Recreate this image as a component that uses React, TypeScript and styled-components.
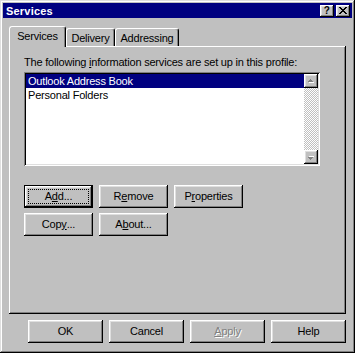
import React from "react";
import styled, { createGlobalStyle } from "styled-components";

const Global = createGlobalStyle`
  html, body {
    margin: 0;
    padding: 0;
    background: #c0c0c0;
  }
  body {
    font-family: "Liberation Sans", Arial, sans-serif;
    font-size: 11px;
    letter-spacing: -0.2px;
    color: #000;
  }
`;

const raised = `
  box-shadow: inset -1px -1px #000, inset 1px 1px #fff,
    inset -2px -2px #808080, inset 2px 2px #dfdfdf;
`;

const Window = styled.div`
  width: 355px;
  height: 353px;
  box-sizing: border-box;
  background: #c0c0c0;
  padding: 3px;
  box-shadow: inset -1px -1px #000, inset 1px 1px #dfdfdf,
    inset -2px -2px #808080, inset 2px 2px #fff;
  display: flex;
  flex-direction: column;
`;

const TitleBar = styled.div`
  height: 15px;
  background: #000080;
  color: #fff;
  font-weight: bold;
  letter-spacing: 0.2px;
  display: flex;
  align-items: center;
  justify-content: space-between;
  padding: 0 2px 0 3px;
`;

const CaptionButtons = styled.div`
  display: flex;
  gap: 2px;
`;

const CaptionButton = styled.div`
  width: 14px;
  height: 12px;
  background: #c0c0c0;
  color: #000;
  display: flex;
  align-items: center;
  justify-content: center;
  font-size: 10px;
  line-height: 10px;
  ${raised}
`;

const Body = styled.div`
  padding: 8px 6px 0 6px;
  display: flex;
  flex-direction: column;
`;

const TabStrip = styled.div`
  display: flex;
  align-items: flex-end;
  height: 20px;
  position: relative;
  z-index: 1;
`;

const Tab = styled.div<{ $active?: boolean; $w: number }>`
  width: ${(p) => p.$w}px;
  height: ${(p) => (p.$active ? 21 : 18)}px;
  box-sizing: border-box;
  margin-bottom: ${(p) => (p.$active ? -1 : 0)}px;
  background: #c0c0c0;
  display: flex;
  align-items: center;
  justify-content: center;
  padding-bottom: ${(p) => (p.$active ? 2 : 0)}px;
  border-top: 1px solid #fff;
  border-left: 1px solid #fff;
  border-right: 1px solid #000;
  border-radius: 3px 3px 0 0;
  box-shadow: inset -1px 0 #808080;
`;

const Panel = styled.div`
  height: 268px;
  box-sizing: border-box;
  padding: 10px 14px 0 15px;
  background: #c0c0c0;
  box-shadow: inset -1px -1px #000, inset 1px 1px #fff,
    inset -2px -2px #808080;
  display: flex;
  flex-direction: column;
`;

const Caption = styled.div`
  line-height: 13px;
  height: 13px;
`;

const ListBox = styled.div`
  margin-top: 3px;
  width: 296px;
  height: 94px;
  box-sizing: border-box;
  padding: 2px;
  background: #fff;
  box-shadow: inset 1px 1px #808080, inset -1px -1px #fff,
    inset 2px 2px #000, inset -2px -2px #dfdfdf;
  display: flex;
`;

const Rows = styled.div`
  flex: 1;
  display: flex;
  flex-direction: column;
`;

const Row = styled.div<{ $selected?: boolean }>`
  height: 14px;
  line-height: 14px;
  padding-left: 2px;
  background: ${(p) => (p.$selected ? "#000080" : "transparent")};
  color: ${(p) => (p.$selected ? "#fff" : "#000")};
`;

const ScrollBar = styled.div`
  width: 14px;
  display: flex;
  flex-direction: column;
  background-color: #fff;
  background-image: conic-gradient(#c0c0c0 25%, #fff 0 50%, #c0c0c0 0 75%, #fff 0);
  background-size: 2px 2px;
`;

const ScrollArrow = styled.div`
  width: 14px;
  height: 14px;
  background: #c0c0c0;
  display: flex;
  align-items: center;
  justify-content: center;
  ${raised}
`;

const Track = styled.div`
  flex: 1;
`;

const ButtonGrid = styled.div`
  margin-top: 19px;
  display: grid;
  grid-template-columns: repeat(3, 69px);
  grid-auto-rows: 23px;
  gap: 5px 6px;
`;

const Button = styled.div<{ $w?: number; $default?: boolean; $disabled?: boolean }>`
  width: ${(p) => p.$w ?? 69}px;
  height: 23px;
  box-sizing: border-box;
  padding: 4px;
  background: #c0c0c0;
  display: flex;
  color: ${(p) => (p.$disabled ? "#808080" : "#000")};
  text-shadow: ${(p) => (p.$disabled ? "1px 1px #fff" : "none")};
  box-shadow: ${(p) =>
    p.$default
      ? "inset 0 0 0 1px #000, inset -2px -2px #000, inset 2px 2px #fff, inset -3px -3px #808080, inset 3px 3px #dfdfdf"
      : "inset -1px -1px #000, inset 1px 1px #fff, inset -2px -2px #808080, inset 2px 2px #dfdfdf"};
`;

const ButtonLabel = styled.span<{ $focus?: boolean }>`
  flex: 1;
  display: flex;
  align-items: center;
  justify-content: center;
  border: 1px dotted ${(p) => (p.$focus ? "#000" : "transparent")};
  line-height: 13px;
`;

const Footer = styled.div`
  margin-top: 6px;
  display: flex;
  justify-content: flex-end;
  gap: 6px;
`;

const CloseGlyph = () => (
  <svg width="8" height="7" viewBox="0 0 8 7" shapeRendering="crispEdges">
    <path
      d="M0 0h2v1h-2zM6 0h2v1h-2zM1 1h2v1h-2zM5 1h2v1h-2zM2 2h4v1h-4zM3 3h2v1h-2zM2 4h4v1h-4zM1 5h2v1h-2zM5 5h2v1h-2zM0 6h2v1h-2zM6 6h2v1h-2z"
      fill="#000"
    />
  </svg>
);

const Arrow = ({ down }: { down?: boolean }) => (
  <svg width="8" height="5" viewBox="0 0 8 5" shapeRendering="crispEdges">
    <g transform={down ? "translate(0 5) scale(1 -1)" : undefined}>
      <path d="M4 1h1v1h1v1h1v1h-5v-1h1v-1h1z" fill="#fff" />
      <path d="M3 0h1v1h1v1h1v1h-5v-1h1v-1h1z" fill="#808080" />
    </g>
  </svg>
);

const App = () => {
  return (
    <>
      <Global />
      <Window>
        <TitleBar>
          <span>Services</span>
          <CaptionButtons>
            <CaptionButton>?</CaptionButton>
            <CaptionButton>
              <CloseGlyph />
            </CaptionButton>
          </CaptionButtons>
        </TitleBar>
        <Body>
          <TabStrip>
            <Tab $active $w={57}>Services</Tab>
            <Tab $w={49}>Delivery</Tab>
            <Tab $w={64}>Addressing</Tab>
          </TabStrip>
          <Panel>
            <Caption>
              The following <u>i</u>nformation services are set up in this profile:
            </Caption>
            <ListBox>
              <Rows>
                <Row $selected>Outlook Address Book</Row>
                <Row>Personal Folders</Row>
              </Rows>
              <ScrollBar>
                <ScrollArrow>
                  <Arrow />
                </ScrollArrow>
                <Track />
                <ScrollArrow>
                  <Arrow down />
                </ScrollArrow>
              </ScrollBar>
            </ListBox>
            <ButtonGrid>
              <Button $default>
                <ButtonLabel $focus>
                  A<u>d</u>d...
                </ButtonLabel>
              </Button>
              <Button>
                <ButtonLabel>
                  R<u>e</u>move
                </ButtonLabel>
              </Button>
              <Button>
                <ButtonLabel>
                  P<u>r</u>operties
                </ButtonLabel>
              </Button>
              <Button>
                <ButtonLabel>
                  Cop<u>y</u>...
                </ButtonLabel>
              </Button>
              <Button>
                <ButtonLabel>
                  A<u>b</u>out...
                </ButtonLabel>
              </Button>
            </ButtonGrid>
          </Panel>
          <Footer>
            <Button $w={75}>
              <ButtonLabel>OK</ButtonLabel>
            </Button>
            <Button $w={75}>
              <ButtonLabel>Cancel</ButtonLabel>
            </Button>
            <Button $w={75} $disabled>
              <ButtonLabel>
                <u>A</u>pply
              </ButtonLabel>
            </Button>
            <Button $w={75}>
              <ButtonLabel>Help</ButtonLabel>
            </Button>
          </Footer>
        </Body>
      </Window>
    </>
  );
};

export default App;
